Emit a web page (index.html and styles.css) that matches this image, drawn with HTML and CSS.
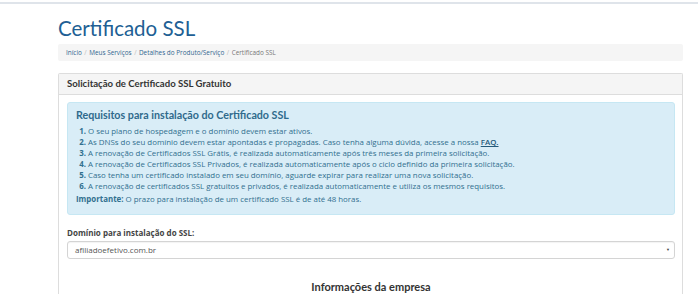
FILE: index.html
```html
<!DOCTYPE html>
<html lang="pt-BR">
<head>
<meta charset="utf-8">
<title>Certificado SSL</title>
<link rel="stylesheet" href="styles.css">
</head>
<body>
<div class="topline"></div>
<main class="container">
  <h1 class="page-title">Certificado SSL</h1>
  <nav class="breadcrumb">
    <a href="#">Início</a><span class="sep">/</span>
    <a href="#">Meus Serviços</a><span class="sep">/</span>
    <a href="#">Detalhes do Produto/Serviço</a><span class="sep">/</span>
    <span class="active">Certificado SSL</span>
  </nav>
  <section class="panel">
    <div class="panel-heading">Solicitação de Certificado SSL Gratuito</div>
    <div class="panel-body">
      <div class="alert">
        <h2 class="alert-title">Requisitos para instalação do Certificado SSL</h2>
        <ol class="req-list">
          <li>O seu plano de hospedagem e o domínio devem estar ativos.</li>
          <li>As DNSs do seu domínio devem estar apontadas e propagadas. Caso tenha alguma dúvida, acesse a nossa <a href="#">FAQ.</a></li>
          <li>A renovação de Certificados SSL Grátis, é realizada automaticamente após três meses da primeira solicitação.</li>
          <li>A renovação de Certificados SSL Privados, é realizada automaticamente após o ciclo definido da primeira solicitação.</li>
          <li>Caso tenha um certificado instalado em seu domínio, aguarde expirar para realizar uma nova solicitação.</li>
          <li>A renovação de certificados SSL gratuitos e privados, é realizada automaticamente e utiliza os mesmos requisitos.</li>
        </ol>
        <p class="note"><strong>Importante:</strong> O prazo para instalação de um certificado SSL é de até 48 horas.</p>
      </div>
      <div class="form-group">
        <label class="field-label">Domínio para instalação do SSL:</label>
        <div class="select">
          <span>afiliadoefetivo.com.br</span>
          <span class="caret">▼</span>
        </div>
      </div>
      <h3 class="section-title">Informações da empresa</h3>
    </div>
  </section>
</main>
</body>
</html>
```
FILE: styles.css
```css
html, body {
  margin: 0;
  padding: 0;
  background: #fff;
  font-family: "Open Sans", "Liberation Sans", sans-serif;
  color: #333;
  overflow: hidden;
}
.topline {
  height: 2px;
  border-bottom: 2px solid #dfe4ea;
}
.container {
  width: 625px;
  margin-left: 58px;
}
.page-title {
  margin: 12px 0 0;
  font-family: "Lato", "Liberation Sans", sans-serif;
  font-weight: 400;
  font-size: 20.5px;
  line-height: 25px;
  color: #215f94;
}
.breadcrumb {
  margin-top: 3px;
  height: 17px;
  background: #f5f5f5;
  border-radius: 2px;
  padding-left: 8px;
  display: flex;
  align-items: center;
  font-size: 6.4px;
  line-height: 17px;
}
.breadcrumb a {
  color: #31658f;
  text-decoration: none;
}
.breadcrumb .sep {
  color: #bbb;
  margin: 0 2.5px;
}
.breadcrumb .active {
  color: #777;
}
.panel {
  margin-top: 12px;
  border: 1px solid #ddd;
  border-bottom: none;
  border-radius: 2px 2px 0 0;
}
.panel-heading {
  height: 20px;
  background: #f5f5f5;
  border-bottom: 1px solid #ddd;
  padding-left: 8px;
  font-family: "Lato", "Liberation Sans", sans-serif;
  font-weight: 700;
  font-size: 9.6px;
  line-height: 20px;
  color: #333;
}
.panel-body {
  padding: 7px 7px 0 8px;
}
.alert {
  background: #d9edf7;
  border: 1px solid #c6e7f3;
  border-radius: 3px;
  padding: 5px 8px 9px;
  color: #31708f;
  font-size: 7.9px;
}
.alert-title {
  margin: 0;
  font-family: "Lato", "Liberation Sans", sans-serif;
  font-weight: 700;
  font-size: 10.7px;
  line-height: 14px;
  color: #2f6a8c;
}
.req-list {
  margin: 4px 0 0;
  padding-left: 12px;
  line-height: 11.1px;
}
.req-list li::marker {
  font-weight: 700;
}
.req-list a {
  color: #245a7a;
  font-weight: 600;
  text-decoration: underline;
}
.note {
  margin: 1px 0 0;
  line-height: 11px;
}
.note strong {
  font-weight: 700;
}
.form-group {
  margin-top: 12px;
}
.field-label {
  display: block;
  font-size: 8px;
  line-height: 11px;
  font-weight: 700;
  color: #444;
}
.select {
  margin-top: 3px;
  height: 16px;
  border: 1px solid #d4d4d4;
  border-radius: 3px;
  display: flex;
  align-items: center;
  justify-content: space-between;
  padding: 0 4px 0 7px;
  font-size: 8px;
  color: #555;
  box-shadow: inset 0 1px 1px rgba(0,0,0,0.05);
}
.caret {
  font-size: 4px;
  color: #444;
}
.section-title {
  margin: 21px 0 0;
  text-align: center;
  font-family: "Lato", "Liberation Sans", sans-serif;
  font-weight: 700;
  font-size: 11px;
  line-height: 14px;
  color: #333;
}
```
